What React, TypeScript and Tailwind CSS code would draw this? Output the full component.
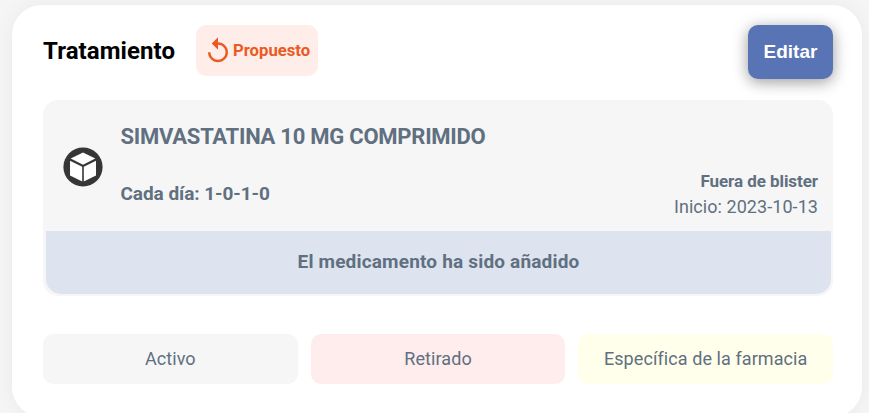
const legend = [
  { label: 'Activo', tone: 'bg-[#f6f6f6]' },
  { label: 'Retirado', tone: 'bg-[#ffecec]' },
  { label: 'Específica de la farmacia', tone: 'bg-[#ffffeb]' },
];

function ReplayIcon() {
  return (
    <svg viewBox="0 0 24 24" className="size-[30px] shrink-0" fill="currentColor">
      <path d="M12 5V1L7 6l5 5V7c3.31 0 6 2.69 6 6s-2.69 6-6 6-6-2.69-6-6H4c0 4.42 3.58 8 8 8s8-3.58 8-8-3.58-8-8-8z" />
    </svg>
  );
}

function BoxIcon() {
  return (
    <svg viewBox="0 0 40 40" className="size-10 shrink-0">
      <circle cx="20" cy="20" r="19.6" fill="#363636" />
      <path d="M20 5.6 32.3 11.6 20 17.8 7.7 11.6Z" fill="#fff" />
      <path d="M7 13.8 19.2 19.8v14.8L7 28.6Z" fill="#fff" />
      <path d="M33 13.8 20.8 19.8v14.8l12.2-6Z" fill="#fff" />
    </svg>
  );
}

export default function App() {
  return (
    <div className="h-[413px] overflow-hidden bg-[#f5f5f5] pl-3 pr-[7px] pt-[5px] font-[Roboto,sans-serif] text-[#607080]">
      <main className="h-[412px] rounded-[30px] bg-white pl-[31px] pr-[29px] pt-5 shadow-[0_0_20px_rgba(0,0,0,0.05)]">
        <header className="flex h-[54px] items-start">
          <h1 className="flex h-[51px] w-[153px] items-center text-2xl font-bold tracking-[0.08px] text-black">Tratamiento</h1>
          <div className="flex h-[51px] w-[122px] items-center rounded-[10px] bg-[#feede8] pl-[7px] text-[#eb5a23]">
            <ReplayIcon />
            <span className="text-[16.7px] font-bold">Propuesto</span>
          </div>
          <button className="ml-auto h-[54px] w-[85px] rounded-[10px] bg-[#5974b5] font-['Liberation_Sans',Arial,sans-serif] text-[19px] font-bold text-white shadow-[0_3px_15px_rgba(0,0,0,0.4)]">
            Editar
          </button>
        </header>

        <section className="mt-[21px] h-[196px] rounded-[15px] bg-[#f6f6f6] pl-[3px] pr-[2px]">
          <div className="flex h-[131px] items-center pl-[17px] pr-[13px]">
            <div className="pt-[3px]"><BoxIcon /></div>
            <div className="ml-[17.5px] flex h-full flex-col pt-[23px] font-bold">
              <h2 className="text-[22px] leading-7 tracking-[-0.25px]">SIMVASTATINA 10 MG COMPRIMIDO</h2>
              <p className="mt-[29px] text-[19px] leading-7 tracking-[-0.06px]">Cada día: 1-0-1-0</p>
            </div>
            <div className="ml-auto flex h-full flex-col pt-[69px] text-right">
              <p className="text-[17px] font-bold leading-[25px] tracking-[-0.06px]">Fuera de blister</p>
              <p className="text-lg leading-[25px] tracking-[0.06px]">Inicio: 2023-10-13</p>
            </div>
          </div>
          <div className="flex h-[63px] items-center justify-center rounded-b-[15px] bg-[#dde3ef] text-[19px] font-bold tracking-[0.18px]">
            El medicamento ha sido añadido
          </div>
        </section>

        <footer className="mt-[38px] grid grid-cols-3 gap-[13px]">
          {legend.map(({ label, tone }) => (
            <div key={label} className={`flex h-[50px] items-center justify-center rounded-[10px] text-lg tracking-[0.08px] ${tone}`}>
              {label}
            </div>
          ))}
        </footer>
      </main>
    </div>
  );
}
